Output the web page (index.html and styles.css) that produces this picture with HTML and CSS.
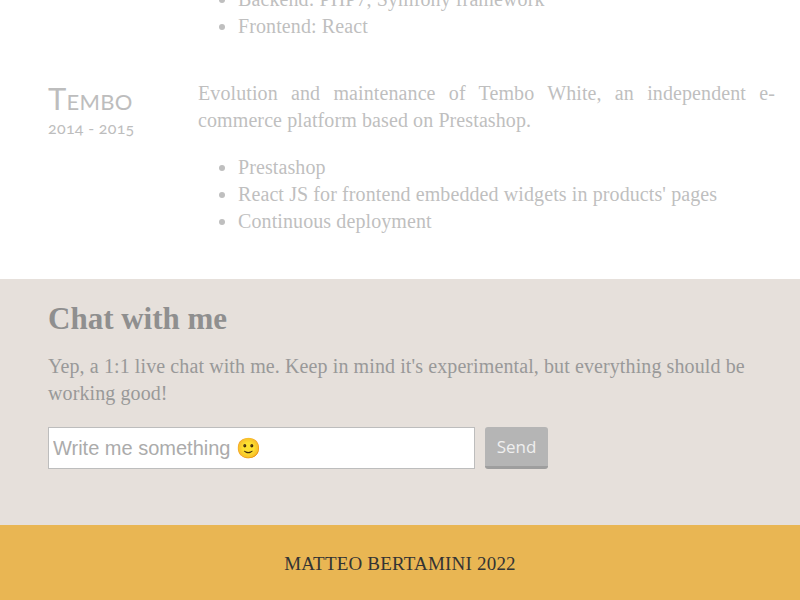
FILE: index.html
```html
<!DOCTYPE html>
<html lang="en">
<head>
<meta charset="utf-8">
<title>Matteo Bertamini</title>
<link rel="stylesheet" href="styles.css">
</head>
<body>
<section class="work">
  <div class="job job-prev">
    <div class="job-head"></div>
    <div class="job-body">
      <ul class="skills">
        <li>Backend: PHP7, Symfony framework</li>
        <li>Frontend: React</li>
      </ul>
    </div>
  </div>
  <div class="job">
    <div class="job-head">
      <h3 class="company">Tembo</h3>
      <div class="period">2014 - 2015</div>
    </div>
    <div class="job-body">
      <p class="desc">Evolution and maintenance of Tembo White, an independent e-commerce platform based on Prestashop.</p>
      <ul class="skills">
        <li>Prestashop</li>
        <li>React JS for frontend embedded widgets in products' pages</li>
        <li>Continuous deployment</li>
      </ul>
    </div>
  </div>
</section>
<section class="chat">
  <h2 class="chat-title">Chat with me</h2>
  <p class="chat-text">Yep, a 1:1 live chat with me. Keep in mind it's experimental, but everything should be working good!</p>
  <form class="chat-form">
    <input class="chat-input" type="text" placeholder="Write me something &#x1F642;">
    <button class="chat-send" type="button">Send</button>
  </form>
</section>
<footer class="footer">MATTEO BERTAMINI 2022</footer>
</body>
</html>
```
FILE: styles.css
```css
html, body {
  margin: 0;
  padding: 0;
}
body {
  font-family: "Liberation Serif", serif;
  font-size: 20px;
  letter-spacing: 0.1px;
  line-height: 27px;
  background: #ffffff;
}
.work {
  padding: 0 25px 44px 48px;
  color: #bfbfbf;
  display: flex;
  flex-direction: column;
  gap: 40px;
}
.job {
  display: grid;
  grid-template-columns: 150px 1fr;
}
.job-prev {
  margin-top: -14px;
}
.skills {
  margin: 0;
  padding-left: 40px;
}
.company {
  margin: 1px 0 0;
  font-family: "Lato", "Open Sans", sans-serif;
  font-weight: 400;
  font-variant: small-caps;
  font-size: 31px;
  line-height: 34px;
  letter-spacing: 0.3px;
  color: #bdbdbd;
}
.period {
  margin-top: 1px;
  font-family: "Lato", sans-serif;
  font-size: 16px;
  line-height: 24px;
  letter-spacing: 0.3px;
  font-variant-numeric: oldstyle-nums;
  color: #bdbdbd;
}
.desc {
  margin: 0 0 20px;
  text-align: justify;
}
.chat {
  background: #e6e0db;
  padding: 22px 48px 56px;
  color: #999999;
}
.chat-title {
  margin: 0;
  font-size: 31px;
  line-height: 36px;
  font-weight: 700;
  letter-spacing: 0;
  color: #8f8f8f;
}
.chat-text {
  margin: 16px 0 20px;
}
.chat-form {
  display: flex;
  gap: 10px;
  align-items: stretch;
}
.chat-input {
  box-sizing: border-box;
  width: 427px;
  height: 42px;
  margin: 0;
  padding: 0 4px;
  border: 1px solid #bdbdbd;
  background: #ffffff;
  font-family: "Liberation Sans", Arial, sans-serif;
  font-size: 20px;
  color: #555;
}
.chat-input::placeholder {
  color: #ababab;
}
.chat-send {
  box-sizing: border-box;
  width: 63px;
  height: 42px;
  margin: 0;
  padding: 0;
  border: 0;
  border-bottom: 3px solid #9e9e9e;
  border-radius: 3px;
  background: #b5b5b5;
  color: #efefef;
  font-family: "Open Sans", sans-serif;
  font-size: 17px;
}
.footer {
  background: #e9b653;
  color: #333333;
  text-align: center;
  font-size: 19px;
  letter-spacing: 0.2px;
  line-height: 75px;
  height: 75px;
  padding-top: 1px;
  box-sizing: border-box;
}
```
